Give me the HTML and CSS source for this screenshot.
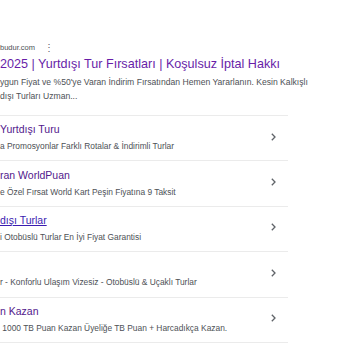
FILE: index.html
```html
<!DOCTYPE html>
<html lang="tr">
<head>
    <meta charset="UTF-8">
    <title>Arama Sonucu</title>
    <link rel="stylesheet" href="styles.css">
</head>
<body>
    <div class="result">
        <!-- Site line -->
        <div class="site">
            <span class="domain">budur.com</span>
            <span class="more">&#8942;</span>
        </div>
        <a class="title" href="#">2025 | Yurtdışı Tur Fırsatları | Koşulsuz İptal Hakkı</a>
        <p class="snippet">ygun Fiyat ve %50'ye Varan İndirim Fırsatından Hemen Yararlanın. Kesin Kalkışlı<br>dışı Turları Uzman...</p>

        <!-- Sitelinks -->
        <ul class="sitelinks">
            <li>
                <div class="link-text">
                    <a class="link-title" href="#">Yurtdışı Turu</a>
                    <span class="link-desc">a Promosyonlar Farklı Rotalar &amp; İndirimli Turlar</span>
                </div>
                <svg class="chevron" width="5" height="8" viewBox="0 0 5 8"><path d="M0.8 0.8 L4 4 L0.8 7.2" fill="none" stroke="#5f6368" stroke-width="1.3"/></svg>
            </li>
            <li>
                <div class="link-text">
                    <a class="link-title" href="#">ran WorldPuan</a>
                    <span class="link-desc">e Özel Fırsat World Kart Peşin Fiyatına 9 Taksit</span>
                </div>
                <svg class="chevron" width="5" height="8" viewBox="0 0 5 8"><path d="M0.8 0.8 L4 4 L0.8 7.2" fill="none" stroke="#5f6368" stroke-width="1.3"/></svg>
            </li>
            <li>
                <div class="link-text">
                    <a class="link-title hover" href="#">dışı Turlar</a>
                    <span class="link-desc">i Otobüslü Turlar En İyi Fiyat Garantisi</span>
                </div>
                <svg class="chevron" width="5" height="8" viewBox="0 0 5 8"><path d="M0.8 0.8 L4 4 L0.8 7.2" fill="none" stroke="#5f6368" stroke-width="1.3"/></svg>
            </li>
            <li>
                <div class="link-text">
                    <a class="link-title" href="#">&nbsp;</a>
                    <span class="link-desc">r - Konforlu Ulaşım Vizesiz - Otobüslü &amp; Uçaklı Turlar</span>
                </div>
                <svg class="chevron" width="5" height="8" viewBox="0 0 5 8"><path d="M0.8 0.8 L4 4 L0.8 7.2" fill="none" stroke="#5f6368" stroke-width="1.3"/></svg>
            </li>
            <li>
                <div class="link-text">
                    <a class="link-title" href="#">n Kazan</a>
                    <span class="link-desc">&nbsp;1000 TB Puan Kazan Üyeliğe TB Puan + Harcadıkça Kazan.</span>
                </div>
                <svg class="chevron" width="5" height="8" viewBox="0 0 5 8"><path d="M0.8 0.8 L4 4 L0.8 7.2" fill="none" stroke="#5f6368" stroke-width="1.3"/></svg>
            </li>
        </ul>
    </div>
</body>
</html>
```

FILE: styles.css
```css
/* Page */
body {
    margin: 0;
    background-color: #fff;
    font-family: 'Liberation Sans', Arial, sans-serif;
    overflow: hidden;
}

.result {
    width: 288px;
    padding-top: 41px;
}

/* Site line */
.site {
    display: flex;
    align-items: center;
    gap: 9px;
    height: 12px;
    font-size: 7.5px;
    color: #4d5156;
}

.more {
    font-size: 10px;
    color: #5f6368;
}

.title {
    display: block;
    margin-top: 1px;
    font-size: 12.6px;
    line-height: 20px;
    color: #681da8;
    text-decoration: none;
    white-space: nowrap;
}

.snippet {
    margin: 1px 0 0;
    font-size: 8.6px;
    line-height: 14px;
    color: #4d5156;
    white-space: nowrap;
}

/* Sitelinks */
.sitelinks {
    list-style: none;
    margin: 12px 0 0;
    padding: 0;
    border-top: 1px solid #ebebeb;
}

.sitelinks li {
    display: flex;
    align-items: center;
    justify-content: space-between;
    height: 44.4px;
    border-bottom: 1px solid #ebebeb;
}

.link-text {
    display: flex;
    flex-direction: column;
    gap: 3px;
    margin-top: -2px;
    white-space: nowrap;
}

.link-title {
    font-size: 10.5px;
    line-height: 15px;
    color: #52188c;
    text-decoration: none;
}

.link-title.hover {
    color: #3a1cb0;
    text-decoration: underline;
}

.link-desc {
    font-size: 8.4px;
    line-height: 12px;
    color: #4d5156;
}

.chevron {
    margin-right: 12px;
    margin-top: -3px;
}
```
